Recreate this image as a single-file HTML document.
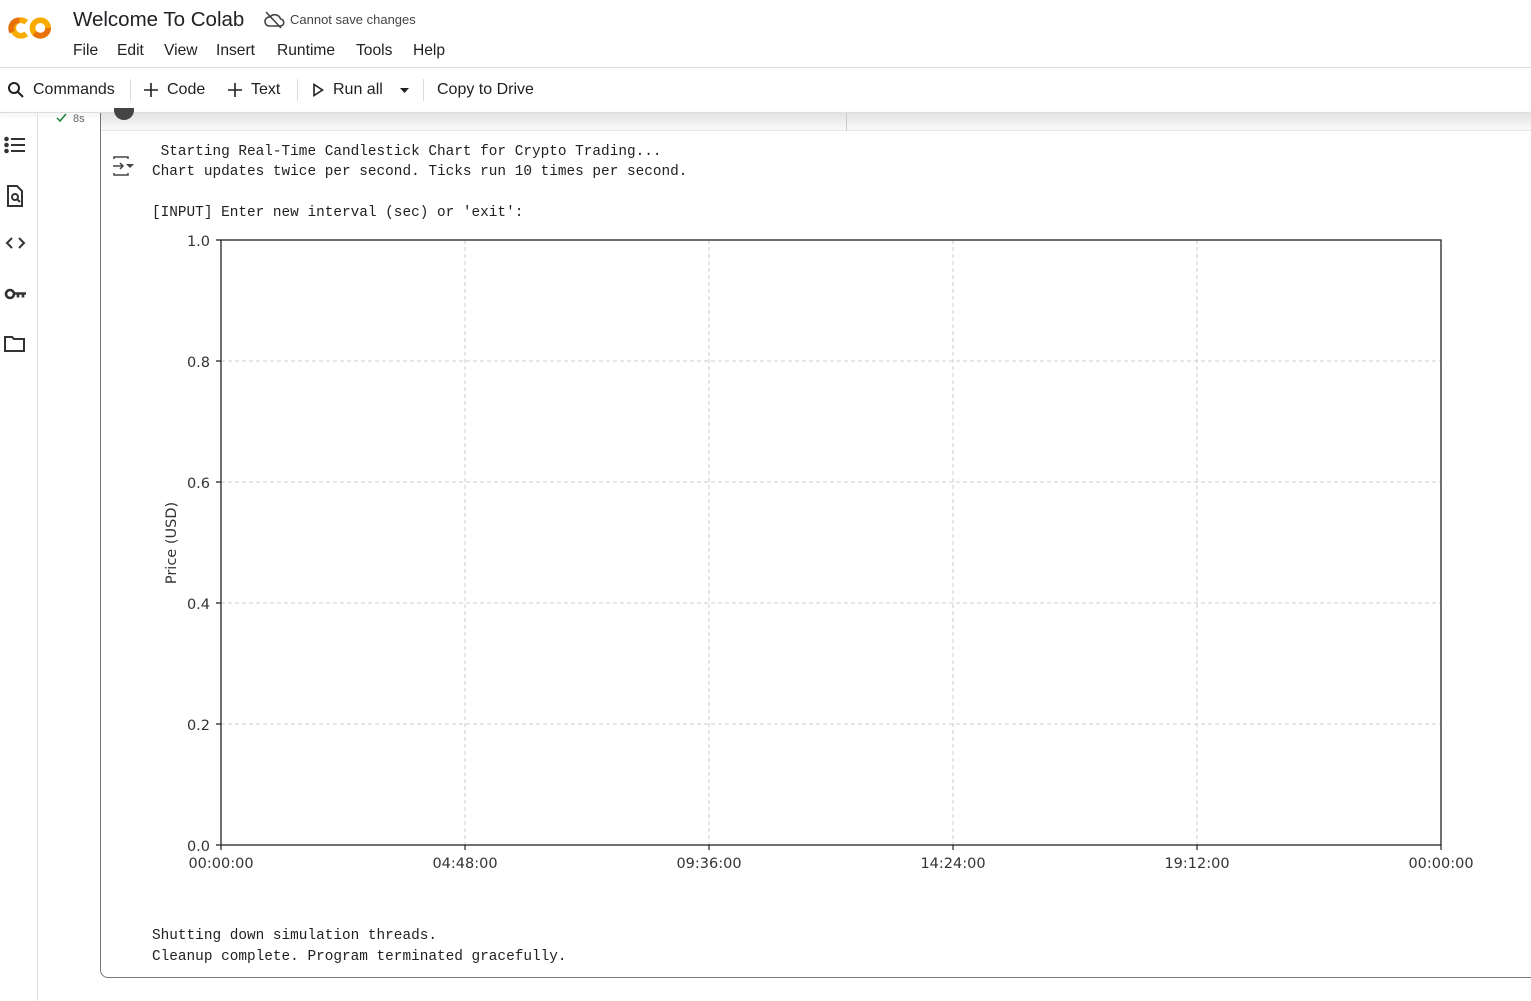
<!DOCTYPE html>
<html><head><meta charset="utf-8"><style>
*{margin:0;padding:0;box-sizing:border-box}
body{width:1531px;height:1001px;overflow:hidden;background:#fff;font-family:"Liberation Sans",Arial,sans-serif;color:#202124;position:relative}
.a{position:absolute;white-space:pre}
.menu span{position:absolute;font-size:15.6px;top:42px}
.tb{font-size:16px;top:81px}
.mono{font-family:"Liberation Mono",monospace;font-size:14.4px;color:#212121}
.sep{position:absolute;top:79px;width:1px;height:22px;background:#dadce0}
</style></head><body>
<!-- logo -->
<svg class="a" style="left:7px;top:12px" width="50" height="32" viewBox="0 0 48 30">
<path d="M18.5 9.5 A7.5 7.5 0 1 0 18.5 20.5" fill="none" stroke="#F9AB00" stroke-width="5.5"/>
<path d="M12 7.7 A7.5 7.5 0 0 0 5 19" fill="none" stroke="#E8710A" stroke-width="5.5"/>
<circle cx="32" cy="15" r="7.5" fill="none" stroke="#F9AB00" stroke-width="5.5"/>
<path d="M39.5 15 A7.5 7.5 0 0 1 26.5 20" fill="none" stroke="#E8710A" stroke-width="5.5"/>
</svg>
<div class="a" style="left:73px;top:8px;font-size:20.5px;color:#202124">Welcome To Colab</div>
<svg class="a" style="left:263px;top:10px" width="22" height="20" viewBox="0 0 22 20"><path d="M6 16h11a3.5 3.5 0 0 0 .5-7A6 6 0 0 0 7 7 4.5 4.5 0 0 0 6 16z" fill="none" stroke="#444" stroke-width="1.6"/><path d="M3 2l15 16" stroke="#444" stroke-width="1.6"/></svg>
<div class="a" style="left:290px;top:12px;font-size:13px;color:#444">Cannot save changes</div>
<div class="menu"><span style="left:73px">File</span><span style="left:117px">Edit</span><span style="left:164px">View</span><span style="left:216px">Insert</span><span style="left:277px">Runtime</span><span style="left:356px">Tools</span><span style="left:413px">Help</span></div>
<div class="a" style="left:0;top:67px;width:1531px;height:1px;background:#dadce0"></div>
<!-- toolbar -->
<svg class="a" style="left:7px;top:81px" width="18" height="18" viewBox="0 0 18 18"><circle cx="7" cy="7" r="5" fill="none" stroke="#202124" stroke-width="2"/><path d="M11 11l5 5" stroke="#202124" stroke-width="2"/></svg>
<div class="a tb" style="left:33px">Commands</div>
<div class="sep" style="left:130px"></div>
<svg class="a" style="left:144px;top:83px" width="14" height="14"><path d="M7 0v14M0 7h14" stroke="#202124" stroke-width="1.6"/></svg>
<div class="a tb" style="left:167px">Code</div>
<svg class="a" style="left:228px;top:83px" width="14" height="14"><path d="M7 0v14M0 7h14" stroke="#202124" stroke-width="1.6"/></svg>
<div class="a tb" style="left:251px">Text</div>
<div class="sep" style="left:297px"></div>
<svg class="a" style="left:312px;top:83px" width="12" height="14" viewBox="0 0 12 14"><path d="M2 1.5v11l8.5-5.5z" fill="none" stroke="#202124" stroke-width="1.6"/></svg>
<div class="a tb" style="left:333px">Run all</div>
<svg class="a" style="left:399px;top:87px" width="12" height="8"><path d="M1 1h9l-4.5 5z" fill="#202124"/></svg>
<div class="sep" style="left:423px"></div>
<div class="a tb" style="left:437px">Copy to Drive</div>
<div class="a" style="left:0;top:112px;width:1531px;height:1px;background:#ddd;box-shadow:0 2px 5px rgba(0,0,0,.18)"></div>
<!-- sidebar -->
<div class="a" style="left:37px;top:113px;width:1px;height:888px;background:#e0e0e0"></div>
<svg class="a" style="left:4px;top:136px" width="26" height="230" viewBox="0 0 26 230" fill="none" stroke="#333" stroke-width="2">
<circle cx="2.5" cy="3" r="1.3" fill="#333"/><circle cx="2.5" cy="9" r="1.3" fill="#333"/><circle cx="2.5" cy="15" r="1.3" fill="#333"/>
<path d="M7 3h14M7 9h14M7 15h14"/>
<path d="M4 50h9l5 5v15H4z"/><circle cx="11" cy="61" r="3"/><path d="M13 63l3 3"/>
<path d="M8 102l-5 5 5 5M15 102l5 5-5 5"/>
<circle cx="6" cy="158" r="4" stroke-width="2.6"/><path d="M10 157.5h12M14 157.5v4M19 157.5v4" stroke-width="2.6"/>
<path d="M1 201h7l2 2h10v12H1z"/>
</svg>
<!-- cell -->
<svg class="a" style="left:56px;top:113px" width="12" height="10"><path d="M1 5l3 3 6-7" fill="none" stroke="#188038" stroke-width="1.5"/></svg>
<div class="a" style="left:73px;top:113px;font-size:11px;color:#666">8s</div>
<div class="a" style="left:100px;top:113px;width:1431px;height:18px;background:linear-gradient(#e2e2e2,#fafafa);border-bottom:1px solid #e6e6e6"></div>
<div class="a" style="left:846px;top:113px;width:1px;height:18px;background:#ccc"></div>
<div class="a" style="left:114px;top:108px;width:20px;height:12px;border-radius:0 0 10px 10px;background:#444"></div>
<div class="a" style="left:100px;top:113px;width:1440px;height:865px;border-left:1px solid #777;border-bottom:1px solid #777;border-bottom-left-radius:8px"></div>
<svg class="a" style="left:112px;top:156px" width="24" height="20" viewBox="0 0 24 20" fill="none" stroke="#444" stroke-width="1.5"><path d="M2 3V1h14v2M2 17v2h14v-2M1 10h10M8 7l3 3-3 3"/><path d="M14 8h8l-4 4z" fill="#444" stroke="none"/></svg>
<div class="a mono" style="left:152px;top:144px"> Starting Real-Time Candlestick Chart for Crypto Trading...</div>
<div class="a mono" style="left:152px;top:164px">Chart updates twice per second. Ticks run 10 times per second.</div>
<div class="a mono" style="left:152px;top:205px">[INPUT] Enter new interval (sec) or 'exit':</div>
<div class="a mono" style="left:152px;top:928px">Shutting down simulation threads.</div>
<div class="a mono" style="left:152px;top:949px">Cleanup complete. Program terminated gracefully.</div>
<!-- chart -->
<svg class="a" style="left:0;top:0" width="1531" height="1001" font-family="DejaVu Sans, sans-serif" font-size="14.5" fill="#333">
<g stroke="#ccc" stroke-dasharray="4,3" stroke-width="1">
<path d="M465 240V845M709 240V845M953 240V845M1197 240V845M221 361H1441M221 482H1441M221 603H1441M221 724H1441"/></g>
<rect x="221" y="240" width="1220" height="605" fill="none" stroke="#222" stroke-width="1.3"/>
<g stroke="#222" stroke-width="1.2"><path d="M216 240h5M216 361h5M216 482h5M216 603h5M216 724h5M216 845h5M221 845v5M465 845v5M709 845v5M953 845v5M1197 845v5M1441 845v5"/></g>
<g text-anchor="end"><text x="210" y="246">1.0</text><text x="210" y="367">0.8</text><text x="210" y="488">0.6</text><text x="210" y="609">0.4</text><text x="210" y="730">0.2</text><text x="210" y="851">0.0</text></g>
<g text-anchor="middle"><text x="221" y="868">00:00:00</text><text x="465" y="868">04:48:00</text><text x="709" y="868">09:36:00</text><text x="953" y="868">14:24:00</text><text x="1197" y="868">19:12:00</text><text x="1441" y="868">00:00:00</text>
<text transform="translate(176 543) rotate(-90)">Price (USD)</text></g>
</svg>
</body></html>
